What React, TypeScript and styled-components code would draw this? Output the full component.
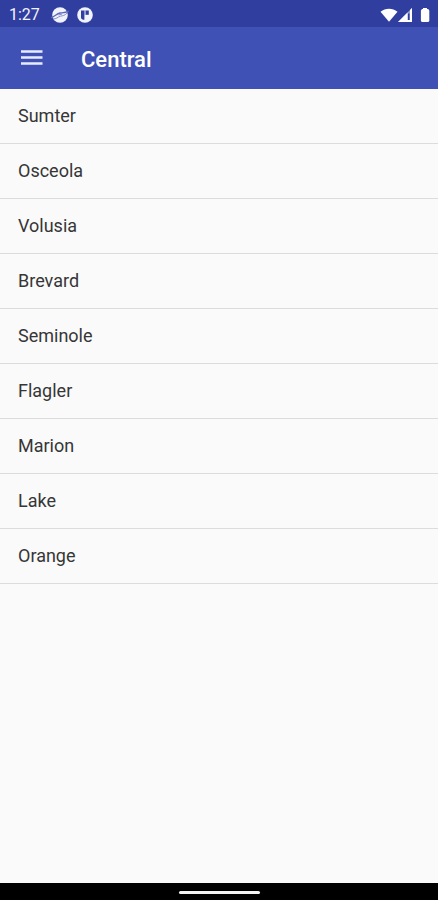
import React from "react";
import styled, { createGlobalStyle } from "styled-components";

const GlobalStyle = createGlobalStyle`
  * { box-sizing: border-box; }
  body { margin: 0; background: #fafafa; font-family: Roboto, sans-serif; }
`;

const Screen = styled.div`
  display: flex;
  flex-direction: column;
  min-height: 100vh;
  background: #fafafa;
`;

const StatusBar = styled.div`
  display: flex;
  align-items: center;
  justify-content: space-between;
  height: 27px;
  padding: 2px 8px 0 9px;
  background: #303f9f;
  color: #f0f2fc;
`;

const StatusGroup = styled.div<{ $gap: number }>`
  display: flex;
  align-items: center;
  gap: ${(p) => p.$gap}px;
  svg { display: block; }
`;

const Clock = styled.time`
  width: 34px;
  font-size: 16px;
  line-height: 20px;
`;

const AppBar = styled.header`
  display: flex;
  align-items: center;
  gap: 36px;
  height: 62px;
  padding: 0 18px;
  background: #3f51b5;
  color: #ffffff;
`;

const MenuButton = styled.button`
  display: flex;
  padding: 0;
  border: 0;
  background: none;
  color: #e8ebfa;
  cursor: pointer;
`;

const Title = styled.h1`
  margin: 0;
  padding-top: 4px;
  font-size: 22px;
  line-height: 28px;
  font-weight: 500;
`;

const List = styled.ul`
  flex: 1;
  margin: 0;
  padding: 0;
  list-style: none;
`;

const Row = styled.li`
  border-top: 1px solid #dcdcdc;

  &:first-child { border-top: 0; }
  &:last-child { border-bottom: 1px solid #dcdcdc; }
`;

const RowButton = styled.button`
  display: block;
  width: 100%;
  padding: 15px 18px;
  border: 0;
  background: none;
  color: #363636;
  font: 400 18px/24px Roboto, sans-serif;
  text-align: left;
  cursor: pointer;
`;

const NavigationBar = styled.footer`
  display: flex;
  align-items: center;
  justify-content: center;
  height: 17px;
  padding-top: 2px;
  background: #000000;
`;

const HomeHandle = styled.div`
  width: 81px;
  height: 3px;
  border-radius: 2px;
  background: #f4f4f4;
`;

const counties = ["Sumter", "Osceola", "Volusia", "Brevard", "Seminole", "Flagler", "Marion", "Lake", "Orange"];

const PlanetIcon = () => (
  <svg width="18" height="18" viewBox="0 0 18 18" aria-hidden="true">
    <circle cx="9" cy="9" r="7.8" fill="#f0f2fc" />
    <path d="M0 11.6C3.5 11 5.5 7.6 9 7c2.8-.4 4.5.2 8.8-1.8" fill="none" stroke="#5a67b6" strokeWidth="1.3" />
    <path d="M2 13c3.2.2 5-2.2 7.4-2.8 2.5-.5 4.2-.6 6.6-3M7.5 9l3.5-.9" fill="none" stroke="#8690cc" strokeWidth="1" />
  </svg>
);

const BadgeIcon = () => (
  <svg width="16" height="16" viewBox="0 0 16 16" aria-hidden="true">
    <circle cx="8" cy="8" r="7.8" fill="#f0f2fc" />
    <path d="M4 3.5h3.4v9.3H5.8L4 11.2z" fill="#303f9f" />
    <path d="M8.6 3.5h3.2v4.3H8.6z" fill="#303f9f" />
    <path d="M7.4 3.5h1.2v4.3H7.4z" fill="#8690cc" />
  </svg>
);

const WifiIcon = () => (
  <svg width="18" height="14" viewBox="0 0 18 14" aria-hidden="true">
    <path d="M.5 3.8C5.4-.3 12.6-.3 17.5 3.8L9 13.8z" fill="#ffffff" />
  </svg>
);

const SignalIcon = () => (
  <svg width="14" height="14" viewBox="0 0 14 14" aria-hidden="true">
    <path d="M0 14 14 0v14z" fill="#9ba3d4" />
    <path d="M0 14 9.5 4.5V14zM12 2 14 0v14h-2zM9 12h5v2H9z" fill="#ffffff" />
    <path d="M10 5.5h1.5V12H10z" fill="#303f9f" />
  </svg>
);

const BatteryIcon = () => (
  <svg width="10" height="14" viewBox="0 0 10 14" aria-hidden="true">
    <path d="M3 0h4v1h1.2L9.3 2.5V13l-1 1H1.9l-1-1V2.5L2 1h1z" fill="#ffffff" />
  </svg>
);

const MenuIcon = () => (
  <svg width="27" height="20" viewBox="0 0 27 20" aria-hidden="true">
    <path d="M3 3.5h21.5M3 9.5h21.5M3 15.5h21.5" stroke="currentColor" strokeWidth="2.6" />
  </svg>
);

export default function App() {
  return (
    <Screen>
      <GlobalStyle />
      <StatusBar>
        <StatusGroup $gap={8}>
          <Clock>1:27</Clock>
          <PlanetIcon />
          <BadgeIcon />
        </StatusGroup>
        <StatusGroup $gap={0}>
          <WifiIcon />
          <StatusGroup $gap={8}>
            <SignalIcon />
            <BatteryIcon />
          </StatusGroup>
        </StatusGroup>
      </StatusBar>
      <AppBar>
        <MenuButton type="button" aria-label="Open menu">
          <MenuIcon />
        </MenuButton>
        <Title>Central</Title>
      </AppBar>
      <List>
        {counties.map((name) => (
          <Row key={name}>
            <RowButton type="button">{name}</RowButton>
          </Row>
        ))}
      </List>
      <NavigationBar>
        <HomeHandle />
      </NavigationBar>
    </Screen>
  );
}
